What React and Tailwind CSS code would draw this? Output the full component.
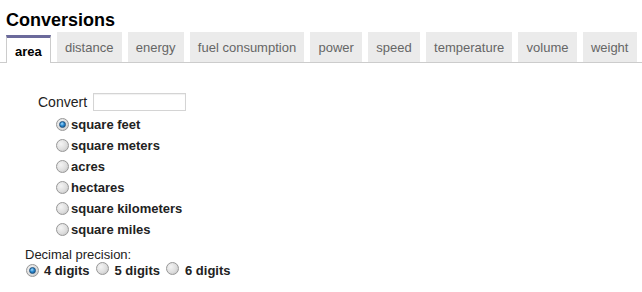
import React from "react";

const tabs = ["area", "distance", "energy", "fuel consumption", "power", "speed", "temperature", "volume", "weight"];
const units = ["square feet", "square meters", "acres", "hectares", "square kilometers", "square miles"];

function Radio({ checked }) {
  return (
    <span className="relative inline-flex h-[13px] w-[13px] shrink-0 items-center justify-center rounded-full border border-[#979797] bg-[radial-gradient(circle_at_35%_35%,#f4f4f4_0%,#dedede_55%,#bdbdbd_100%)]">
      {checked && (
        <span className="h-[7px] w-[7px] rounded-full border border-[#1d4f7c] bg-[radial-gradient(circle_at_40%_35%,#a8dcff_0%,#2a8ad0_45%,#0e4f8c_100%)]" />
      )}
    </span>
  );
}

export default function App() {
  return (
    <div className="h-[292px] w-[642px] overflow-hidden bg-white font-['Liberation_Sans',Arial,sans-serif] text-[#222]">
      <h1 className="pl-[6px] pt-[10px] text-[18px] font-bold leading-[21px] text-black">Conversions</h1>
      <div className="mt-px flex items-end gap-[6px] border-b border-[#cccccc] pl-[6px]">
        {tabs.map((t, i) =>
          i === 0 ? (
            <div
              key={t}
              className="-mb-px flex h-[28px] items-center border-x border-t-[3px] border-x-[#cccccc] border-t-[#6b6a9b] bg-white px-2 pt-[2px] text-[13px] font-bold leading-[15px] text-black"
            >
              {t}
            </div>
          ) : (
            <div
              key={t}
              className="flex h-[30px] items-center bg-[#ebebeb] px-[8.2px] text-[13px] leading-[15px] text-[#666666]"
            >
              {t}
            </div>
          )
        )}
      </div>
      <div className="pt-[30px]">
        <div className="flex h-[18px] items-center pl-[38px]">
          <span className="text-[14px] leading-[16px]">Convert</span>
          <input
            type="text"
            className="ml-[6px] h-[18px] w-[93px] border border-[#d4d4d4] bg-white shadow-[inset_0_1px_1px_rgba(0,0,0,0.06)] outline-none"
          />
        </div>
        <div className="mt-[3px] flex flex-col pl-[56px]">
          {units.map((u, i) => (
            <div key={u} className="flex h-[21px] items-center gap-[2px]">
              <Radio checked={i === 0} />
              <span className="text-[13px] font-bold leading-[15px]">{u}</span>
            </div>
          ))}
        </div>
        <div className="mt-[7px] pl-[25px] text-[13px] leading-[15px]">Decimal precision:</div>
        <div className="flex h-[16px] items-center pl-[26px] text-[13px] font-bold leading-[15px]">
          <Radio checked />
          <span className="ml-[5px]">4 digits</span>
          <span className="ml-[6px]"><Radio /></span>
          <span className="ml-[6px]">5 digits</span>
          <span className="ml-[6px]"><Radio /></span>
          <span className="ml-[6px]">6 digits</span>
        </div>
      </div>
    </div>
  );
}
